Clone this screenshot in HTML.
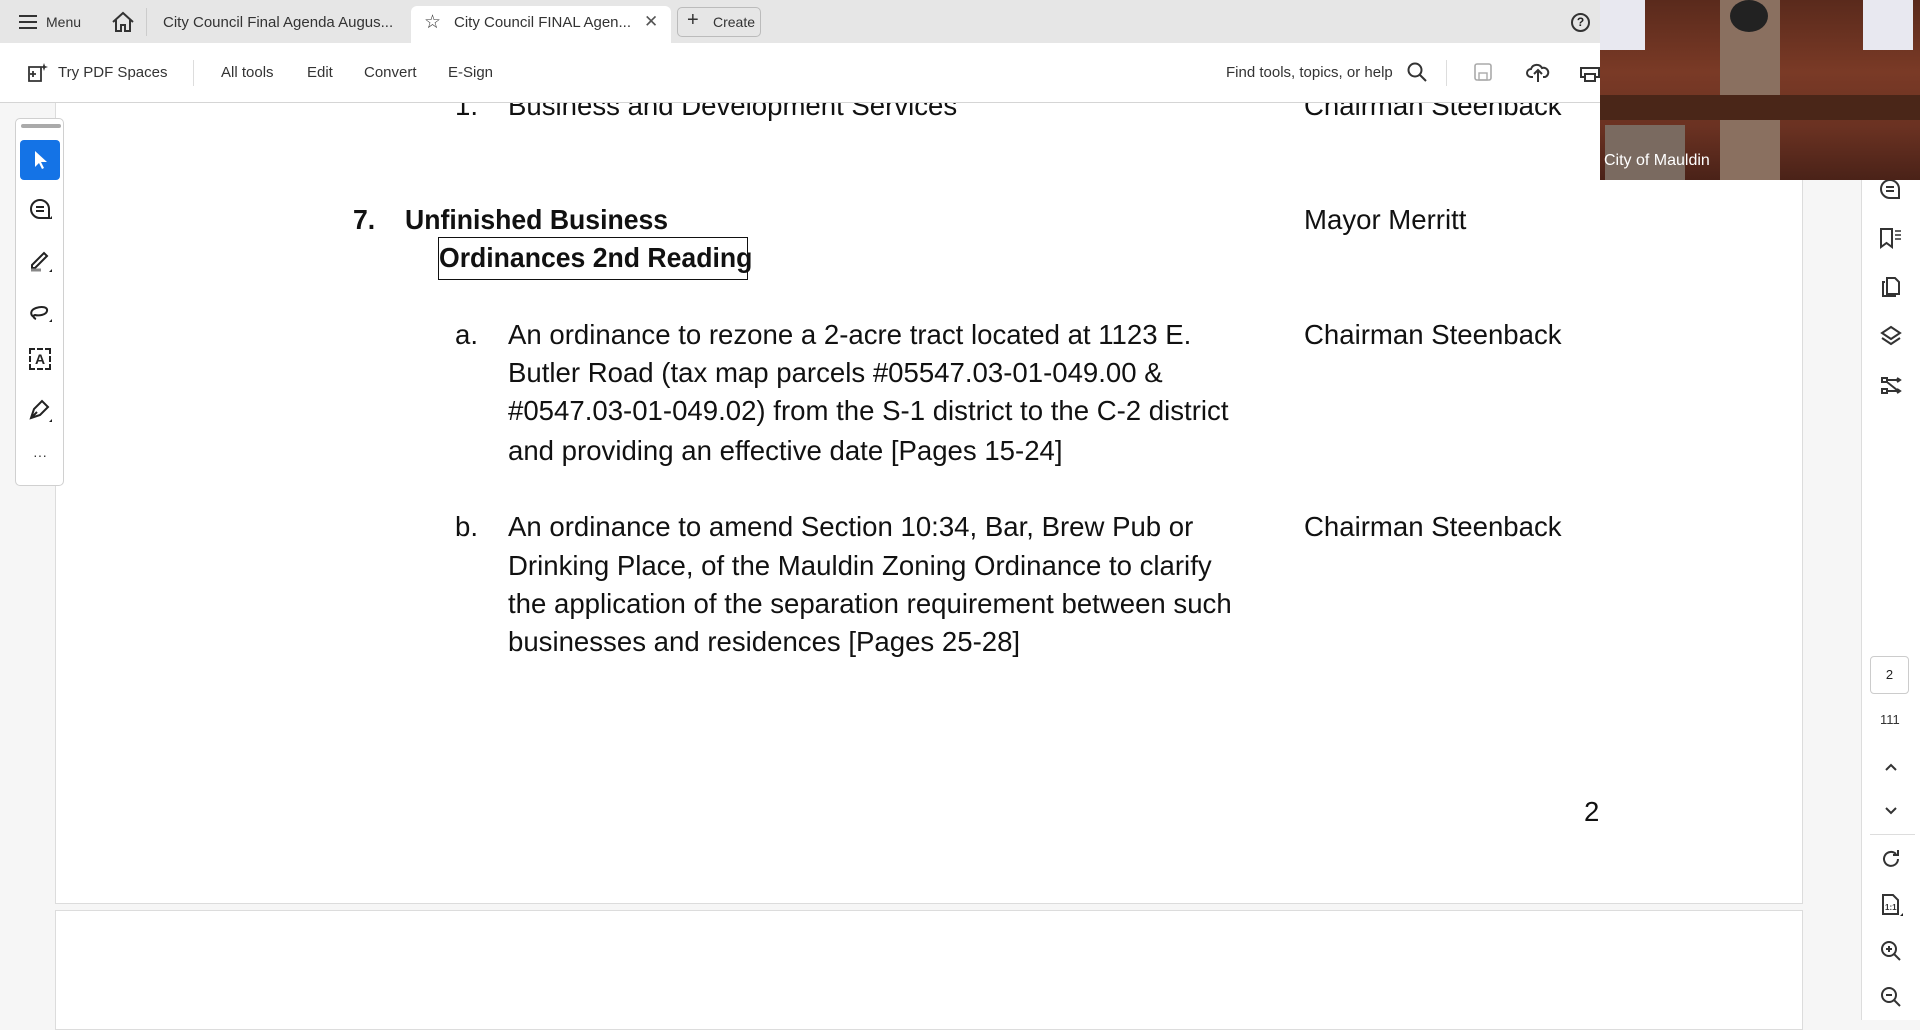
<!DOCTYPE html>
<html><head><meta charset="utf-8"><style>
*{margin:0;padding:0;box-sizing:border-box}
body{width:1920px;height:1020px;overflow:hidden;background:#f6f6f6;font-family:"Liberation Sans",sans-serif;position:relative;color:#222}
.abs{position:absolute}
.tabs{left:0;top:0;width:1920px;height:43px;background:#e6e6e6}
.tb{left:0;top:43px;width:1920px;height:60px;background:#fff;border-bottom:1px solid #d5d5d5}
.t{position:absolute;white-space:nowrap;font-size:15px;color:#333}
.pg{left:55px;top:103px;width:1748px;height:801px;background:#fff;border:1px solid #dcdcdc;border-top:none}
.pg2{left:55px;top:910px;width:1748px;height:120px;background:#fff;border:1px solid #dcdcdc}
.d{position:absolute;white-space:nowrap;font-size:28px;color:#111;transform:scaleX(0.985);transform-origin:left center;line-height:38px}
.b{font-weight:bold;transform:scaleX(0.95)}
.lp{left:15px;top:118px;width:49px;height:368px;background:#fff;border:1px solid #d0d0d0;border-radius:5px}
.rp{left:1861px;top:103px;width:59px;height:917px;background:#fff;border-left:1px solid #ddd}
.ic{position:absolute;font-size:20px;color:#333;width:30px;text-align:center}
</style></head><body>
<div class="abs tabs"></div>
<div class="abs" style="left:411px;top:6px;width:260px;height:37px;background:#fff;border-radius:6px 6px 0 0"></div>
<div class="abs" style="left:677px;top:7px;width:84px;height:30px;border:1px solid #bbb;border-radius:5px"></div>
<svg class="abs" style="left:18px;top:14px" width="20" height="16"><path d="M1 2h18M1 8h18M1 14h18" stroke="#333" stroke-width="2"/></svg>
<div class="t" style="left:46px;top:14px;font-size:14px">Menu</div>
<svg class="abs" style="left:111px;top:11px" width="24" height="22"><path d="M2 11L12 2l10 9M5 9v11h5v-6h4v6h5V9" fill="none" stroke="#333" stroke-width="2"/></svg>
<div class="abs" style="left:146px;top:8px;width:1px;height:28px;background:#ccc"></div>
<div class="t" style="left:163px;top:14px">City Council Final Agenda Augus...</div>
<div class="t" style="left:424px;top:11px;font-size:19px">☆</div>
<div class="t" style="left:454px;top:14px">City Council FINAL Agen...</div>
<div class="t" style="left:644px;top:12px;font-size:17px;color:#555">✕</div>
<div class="t" style="left:687px;top:9px;font-size:20px">+</div>
<div class="t" style="left:713px;top:14px;font-size:14px">Create</div>
<div class="abs" style="left:1571px;top:13px;width:19px;height:19px;border:2px solid #333;border-radius:50%;font-size:12px;font-weight:bold;text-align:center;line-height:15px">?</div>

<div class="abs tb"></div>
<svg class="abs" style="left:26px;top:61px" width="24" height="24"><path d="M3 6h12v14H3zM7 10v6M4 13h6" fill="none" stroke="#333" stroke-width="1.8"/><path d="M18 2l1 3 3 1-3 1-1 3-1-3-3-1 3-1z" fill="#333"/></svg>
<div class="t" style="left:58px;top:64px">Try PDF Spaces</div>
<div class="abs" style="left:193px;top:60px;width:1px;height:26px;background:#ddd"></div>
<div class="t" style="left:221px;top:64px">All tools</div>
<div class="t" style="left:307px;top:64px">Edit</div>
<div class="t" style="left:364px;top:64px">Convert</div>
<div class="t" style="left:448px;top:64px">E-Sign</div>
<div class="t" style="left:1226px;top:64px">Find tools, topics, or help</div>
<svg class="abs" style="left:1407px;top:62px" width="20" height="20"><circle cx="8" cy="8" r="6.5" fill="none" stroke="#333" stroke-width="2"/><path d="M13 13l6 6" stroke="#333" stroke-width="2"/></svg>
<div class="abs" style="left:1446px;top:60px;width:1px;height:26px;background:#ddd"></div>
<svg class="abs" style="left:1474px;top:63px" width="18" height="18"><rect x="1" y="1" width="16" height="16" rx="2" fill="none" stroke="#aaa" stroke-width="1.6"/><rect x="5" y="10" width="8" height="7" fill="none" stroke="#aaa" stroke-width="1.4"/></svg>
<svg class="abs" style="left:1526px;top:61px" width="24" height="22"><path d="M7 16H5a4 4 0 010-8 6 6 0 0111-1 4.5 4.5 0 013 9h-2M12 21V10M8 13l4-4 4 4" fill="none" stroke="#333" stroke-width="2"/></svg>
<svg class="abs" style="left:1580px;top:62px" width="20" height="20"><rect x="1" y="6" width="18" height="9" fill="none" stroke="#333" stroke-width="2"/><rect x="5" y="12" width="10" height="7" fill="#fff" stroke="#333" stroke-width="2"/></svg>

<div class="abs pg"></div>
<div class="abs pg2"></div>
<div class="abs" style="left:55px;top:103px;width:1748px;height:30px;overflow:hidden">
 <div class="d" style="left:400px;top:-16px">1.</div>
 <div class="d" style="left:453px;top:-16px">Business and Development Services</div>
 <div class="d" style="left:1249px;top:-16px">Chairman Steenback</div>
</div>
<div class="d b" style="left:353px;top:201px">7.</div>
<div class="d b" style="left:405px;top:201px">Unfinished Business</div>
<div class="abs" style="left:438px;top:237px;width:310px;height:43px;border:1.5px solid #111"></div>
<div class="d b" style="left:439px;top:239px">Ordinances 2nd Reading</div>
<div class="d" style="left:1304px;top:201px">Mayor Merritt</div>

<div class="d" style="left:455px;top:316px">a.</div>
<div class="d" style="left:508px;top:316px">An ordinance to rezone a 2-acre tract located at 1123 E.</div>
<div class="d" style="left:508px;top:354px">Butler Road (tax map parcels #05547.03-01-049.00 &amp;</div>
<div class="d" style="left:508px;top:392px">#0547.03-01-049.02) from the S-1 district to the C-2 district</div>
<div class="d" style="left:508px;top:432px">and providing an effective date [Pages 15-24]</div>
<div class="d" style="left:1304px;top:316px">Chairman Steenback</div>

<div class="d" style="left:455px;top:508px">b.</div>
<div class="d" style="left:508px;top:508px">An ordinance to amend Section 10:34, Bar, Brew Pub or</div>
<div class="d" style="left:508px;top:547px">Drinking Place, of the Mauldin Zoning Ordinance to clarify</div>
<div class="d" style="left:508px;top:585px">the application of the separation requirement between such</div>
<div class="d" style="left:508px;top:623px">businesses and residences [Pages 25-28]</div>
<div class="d" style="left:1304px;top:508px">Chairman Steenback</div>
<div class="d" style="left:1584px;top:793px">2</div>

<div class="abs lp"></div>
<div class="abs" style="left:21px;top:124px;width:40px;height:4px;background:#aaa;border-radius:2px"></div>
<div class="abs" style="left:20px;top:140px;width:40px;height:40px;background:#1473e6;border-radius:4px"></div>
<svg class="abs" style="left:33px;top:150px" width="16" height="20"><path d="M2 1v16l4-4 3 6 2-1-3-6h6z" fill="#fff"/></svg>
<svg class="abs" style="left:28px;top:198px" width="26" height="26"><path d="M12 2a9 9 0 100 18h9v-9a9 9 0 00-9-9zM8 9h8M8 13h8" fill="none" stroke="#222" stroke-width="2"/><path d="M21 21l3 0 0-3z" fill="#222"/></svg>
<svg class="abs" style="left:28px;top:248px" width="26" height="26"><path d="M4 17L16 5l3 3L7 20H4z" fill="none" stroke="#222" stroke-width="2"/><path d="M3 22h10" stroke="#888" stroke-width="3"/><path d="M21 24l3 0 0-3z" fill="#222"/></svg>
<svg class="abs" style="left:28px;top:298px" width="26" height="26"><path d="M6 19c-4-2-4-7 2-9s12-1 11 3-8 5-12 4c-2 0-2 3 1 4" fill="none" stroke="#222" stroke-width="2"/><path d="M21 24l3 0 0-3z" fill="#222"/></svg>
<div class="abs" style="left:29px;top:348px;width:22px;height:22px;border:2px dashed #222;font-size:14px;font-weight:bold;text-align:center;line-height:18px">A</div>
<svg class="abs" style="left:28px;top:398px" width="26" height="26"><path d="M3 20l3-9 8-8 6 6-8 8zM3 20l6-6" fill="none" stroke="#222" stroke-width="2"/><path d="M21 24l3 0 0-3z" fill="#222"/></svg>
<div class="ic" style="left:25px;top:447px;font-size:14px">···</div>

<div class="abs rp"></div>
<svg class="abs" style="left:1879px;top:178px" width="22" height="22"><path d="M11 2a9 9 0 100 18h9v-9a9 9 0 00-9-9zM7 9h8M7 13h8" fill="none" stroke="#333" stroke-width="2"/></svg>
<svg class="abs" style="left:1879px;top:227px" width="24" height="22"><path d="M2 2h11v18l-5.5-4L2 20z" fill="none" stroke="#333" stroke-width="2"/><path d="M16 4h6M16 8h6M16 12h6" stroke="#333" stroke-width="1.6"/></svg>
<svg class="abs" style="left:1880px;top:276px" width="22" height="22"><path d="M5 6H3v14h12v-2M7 2h8l4 4v12H7z" fill="none" stroke="#333" stroke-width="2"/></svg>
<svg class="abs" style="left:1880px;top:325px" width="22" height="22"><path d="M11 2l9 6-9 6-9-6zM2 13l9 6 9-6" fill="none" stroke="#333" stroke-width="2"/></svg>
<svg class="abs" style="left:1880px;top:374px" width="22" height="22"><path d="M2 4h5v4H2zM2 15h5v4H2zM7 6h12M7 17h12M7 8l10 8M17 4l3 2-3 2M17 15l3 2-3 2" fill="none" stroke="#333" stroke-width="2"/></svg>
<div class="abs" style="left:1870px;top:656px;width:39px;height:38px;border:1px solid #ccc;border-radius:4px;font-size:13px;text-align:center;line-height:36px">2</div>
<div class="t" style="left:1880px;top:712px;font-size:13px">111</div>
<svg class="abs" style="left:1884px;top:762px" width="14" height="10"><path d="M2 8l5-5 5 5" fill="none" stroke="#333" stroke-width="2"/></svg>
<svg class="abs" style="left:1884px;top:806px" width="14" height="10"><path d="M2 2l5 5 5-5" fill="none" stroke="#333" stroke-width="2"/></svg>
<div class="abs" style="left:1870px;top:834px;width:45px;height:1px;background:#ddd"></div>
<svg class="abs" style="left:1880px;top:848px" width="22" height="22"><path d="M18 11a7 7 0 11-2-5M18 2v5h-5" fill="none" stroke="#333" stroke-width="2"/></svg>
<svg class="abs" style="left:1880px;top:893px" width="24" height="24"><path d="M3 2h10l5 5v14H3z" fill="none" stroke="#333" stroke-width="2"/><text x="5" y="17" font-size="8" font-family="Liberation Sans" font-weight="bold" fill="#333">1:1</text><path d="M20 23h3v-3z" fill="#222"/></svg>
<svg class="abs" style="left:1880px;top:940px" width="22" height="22"><circle cx="9" cy="9" r="7" fill="none" stroke="#333" stroke-width="2"/><path d="M14 14l6 6M6 9h6M9 6v6" stroke="#333" stroke-width="2"/></svg>
<svg class="abs" style="left:1880px;top:986px" width="22" height="22"><circle cx="9" cy="9" r="7" fill="none" stroke="#333" stroke-width="2"/><path d="M14 14l6 6M6 9h6" stroke="#333" stroke-width="2"/></svg>

<div class="abs" style="left:1600px;top:0;width:320px;height:180px;background:linear-gradient(180deg,#5a2a1c 0%,#7a3a26 40%,#6b3222 70%,#4a2218 100%);overflow:hidden">
 <div class="abs" style="left:0;top:0;width:45px;height:50px;background:#e8e8f0"></div>
 <div class="abs" style="left:263px;top:0;width:50px;height:50px;background:#e8e8f0"></div>
 <div class="abs" style="left:120px;top:0;width:60px;height:180px;background:#8a7060"></div>
 <div class="abs" style="left:130px;top:0;width:38px;height:32px;border-radius:50%;background:#222"></div>
 <div class="abs" style="left:0;top:95px;width:320px;height:25px;background:#4a2618"></div>
 <div class="abs" style="left:5px;top:125px;width:80px;height:55px;background:#7a6a60"></div>
 <div class="t" style="left:4px;top:152px;color:#fff;font-size:16px">City of Mauldin</div>
</div>
</body></html>
